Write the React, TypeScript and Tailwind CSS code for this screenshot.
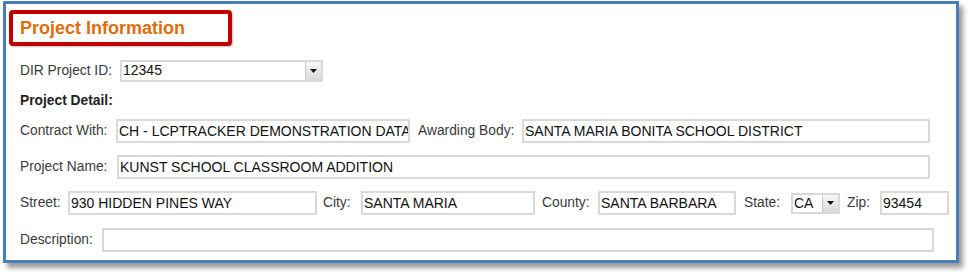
import React from "react";

const font = { fontFamily: '"Liberation Sans", Arial, sans-serif' };

function Box({ w, text, h = "h-[24px]" }: { w: string; text?: string; h?: string }) {
  return (
    <div
      className={`${w} ${h} shrink-0 border-2 border-[#d9d9d9] bg-white flex items-center pl-[1px] overflow-hidden whitespace-nowrap text-[14px] text-[#111] leading-none`}
    >
      {text}
    </div>
  );
}

function Select({ w, text, h }: { w: string; text: string; h: string }) {
  return (
    <div className={`${w} ${h} shrink-0 border-2 border-[#d9d9d9] bg-white flex overflow-hidden`}>
      <div className="flex-1 pl-[1px] pt-[1px] text-[14px] text-[#111] leading-[15px] whitespace-nowrap overflow-hidden">
        {text}
      </div>
      <div className="w-[16px] h-full border-l border-[#c8c8c8] bg-gradient-to-b from-[#f7f7f7] to-[#dadada] flex items-center justify-center">
        <svg width="7" height="4" viewBox="0 0 7 4">
          <path d="M0 0 H7 L3.5 4 Z" fill="#111" />
        </svg>
      </div>
    </div>
  );
}

function Label({ w, children, ml = "" }: { w: string; children: React.ReactNode; ml?: string }) {
  return (
    <span className={`${w} ${ml} shrink-0 text-[13.8px] text-[#3a3a3a] leading-none whitespace-nowrap`}>
      {children}
    </span>
  );
}

export default function App() {
  return (
    <div className="w-[972px] h-[275px] bg-white pt-[1px] pl-[3px]" style={font}>
      <div className="w-[956px] h-[262px] border-[3px] border-[#4a7ebb] bg-white shadow-[4px_5px_5px_rgba(0,0,0,0.4)]">
        <div className="ml-[3px] mt-[6px] w-[223px] h-[36px] border-[4px] border-[#c00000] rounded-[4px] flex items-center pl-[7px] shadow-[1px_1px_2px_rgba(0,0,0,0.25)]">
          <span className="text-[18px] font-bold text-[#e36c0a] leading-none">Project Information</span>
        </div>

        <div className="pl-[14px] flex flex-col">
          <div className="mt-[14px] h-[22px] flex items-center">
            <Label w="w-[100px]">DIR Project ID:</Label>
            <Select w="w-[203px]" h="h-[22px]" text="12345" />
          </div>

          <div className="mt-[10px] h-[18px] flex items-center">
            <span className="text-[13.8px] font-bold text-[#222] leading-none">Project Detail:</span>
          </div>

          <div className="mt-[9px] h-[24px] flex items-center">
            <Label w="w-[96px]">Contract With:</Label>
            <Box w="w-[294px]" text="CH - LCPTRACKER DEMONSTRATION DATA" />
            <Label w="w-[104px]" ml="ml-[8px]">Awarding Body:</Label>
            <Box w="w-[408px]" text="SANTA MARIA BONITA SCHOOL DISTRICT" />
          </div>

          <div className="mt-[12px] h-[24px] flex items-center">
            <Label w="w-[97px]">Project Name:</Label>
            <Box w="w-[813px]" text="KUNST SCHOOL CLASSROOM ADDITION" />
          </div>

          <div className="mt-[12px] h-[24px] flex items-center">
            <Label w="w-[48px]">Street:</Label>
            <Box w="w-[249px]" text="930 HIDDEN PINES WAY" />
            <Label w="w-[38px]" ml="ml-[6px]">City:</Label>
            <Box w="w-[174px]" text="SANTA MARIA" />
            <Label w="w-[56px]" ml="ml-[7px]">County:</Label>
            <Box w="w-[138px]" text="SANTA BARBARA" />
            <Label w="w-[47px]" ml="ml-[8px]">State:</Label>
            <Select w="w-[49px]" h="h-[21px]" text="CA" />
            <Label w="w-[33px]" ml="ml-[7px]">Zip:</Label>
            <Box w="w-[69px]" text="93454" />
          </div>

          <div className="mt-[13px] h-[24px] flex items-center">
            <Label w="w-[82px]">Description:</Label>
            <Box w="w-[832px]" />
          </div>
        </div>
      </div>
    </div>
  );
}
